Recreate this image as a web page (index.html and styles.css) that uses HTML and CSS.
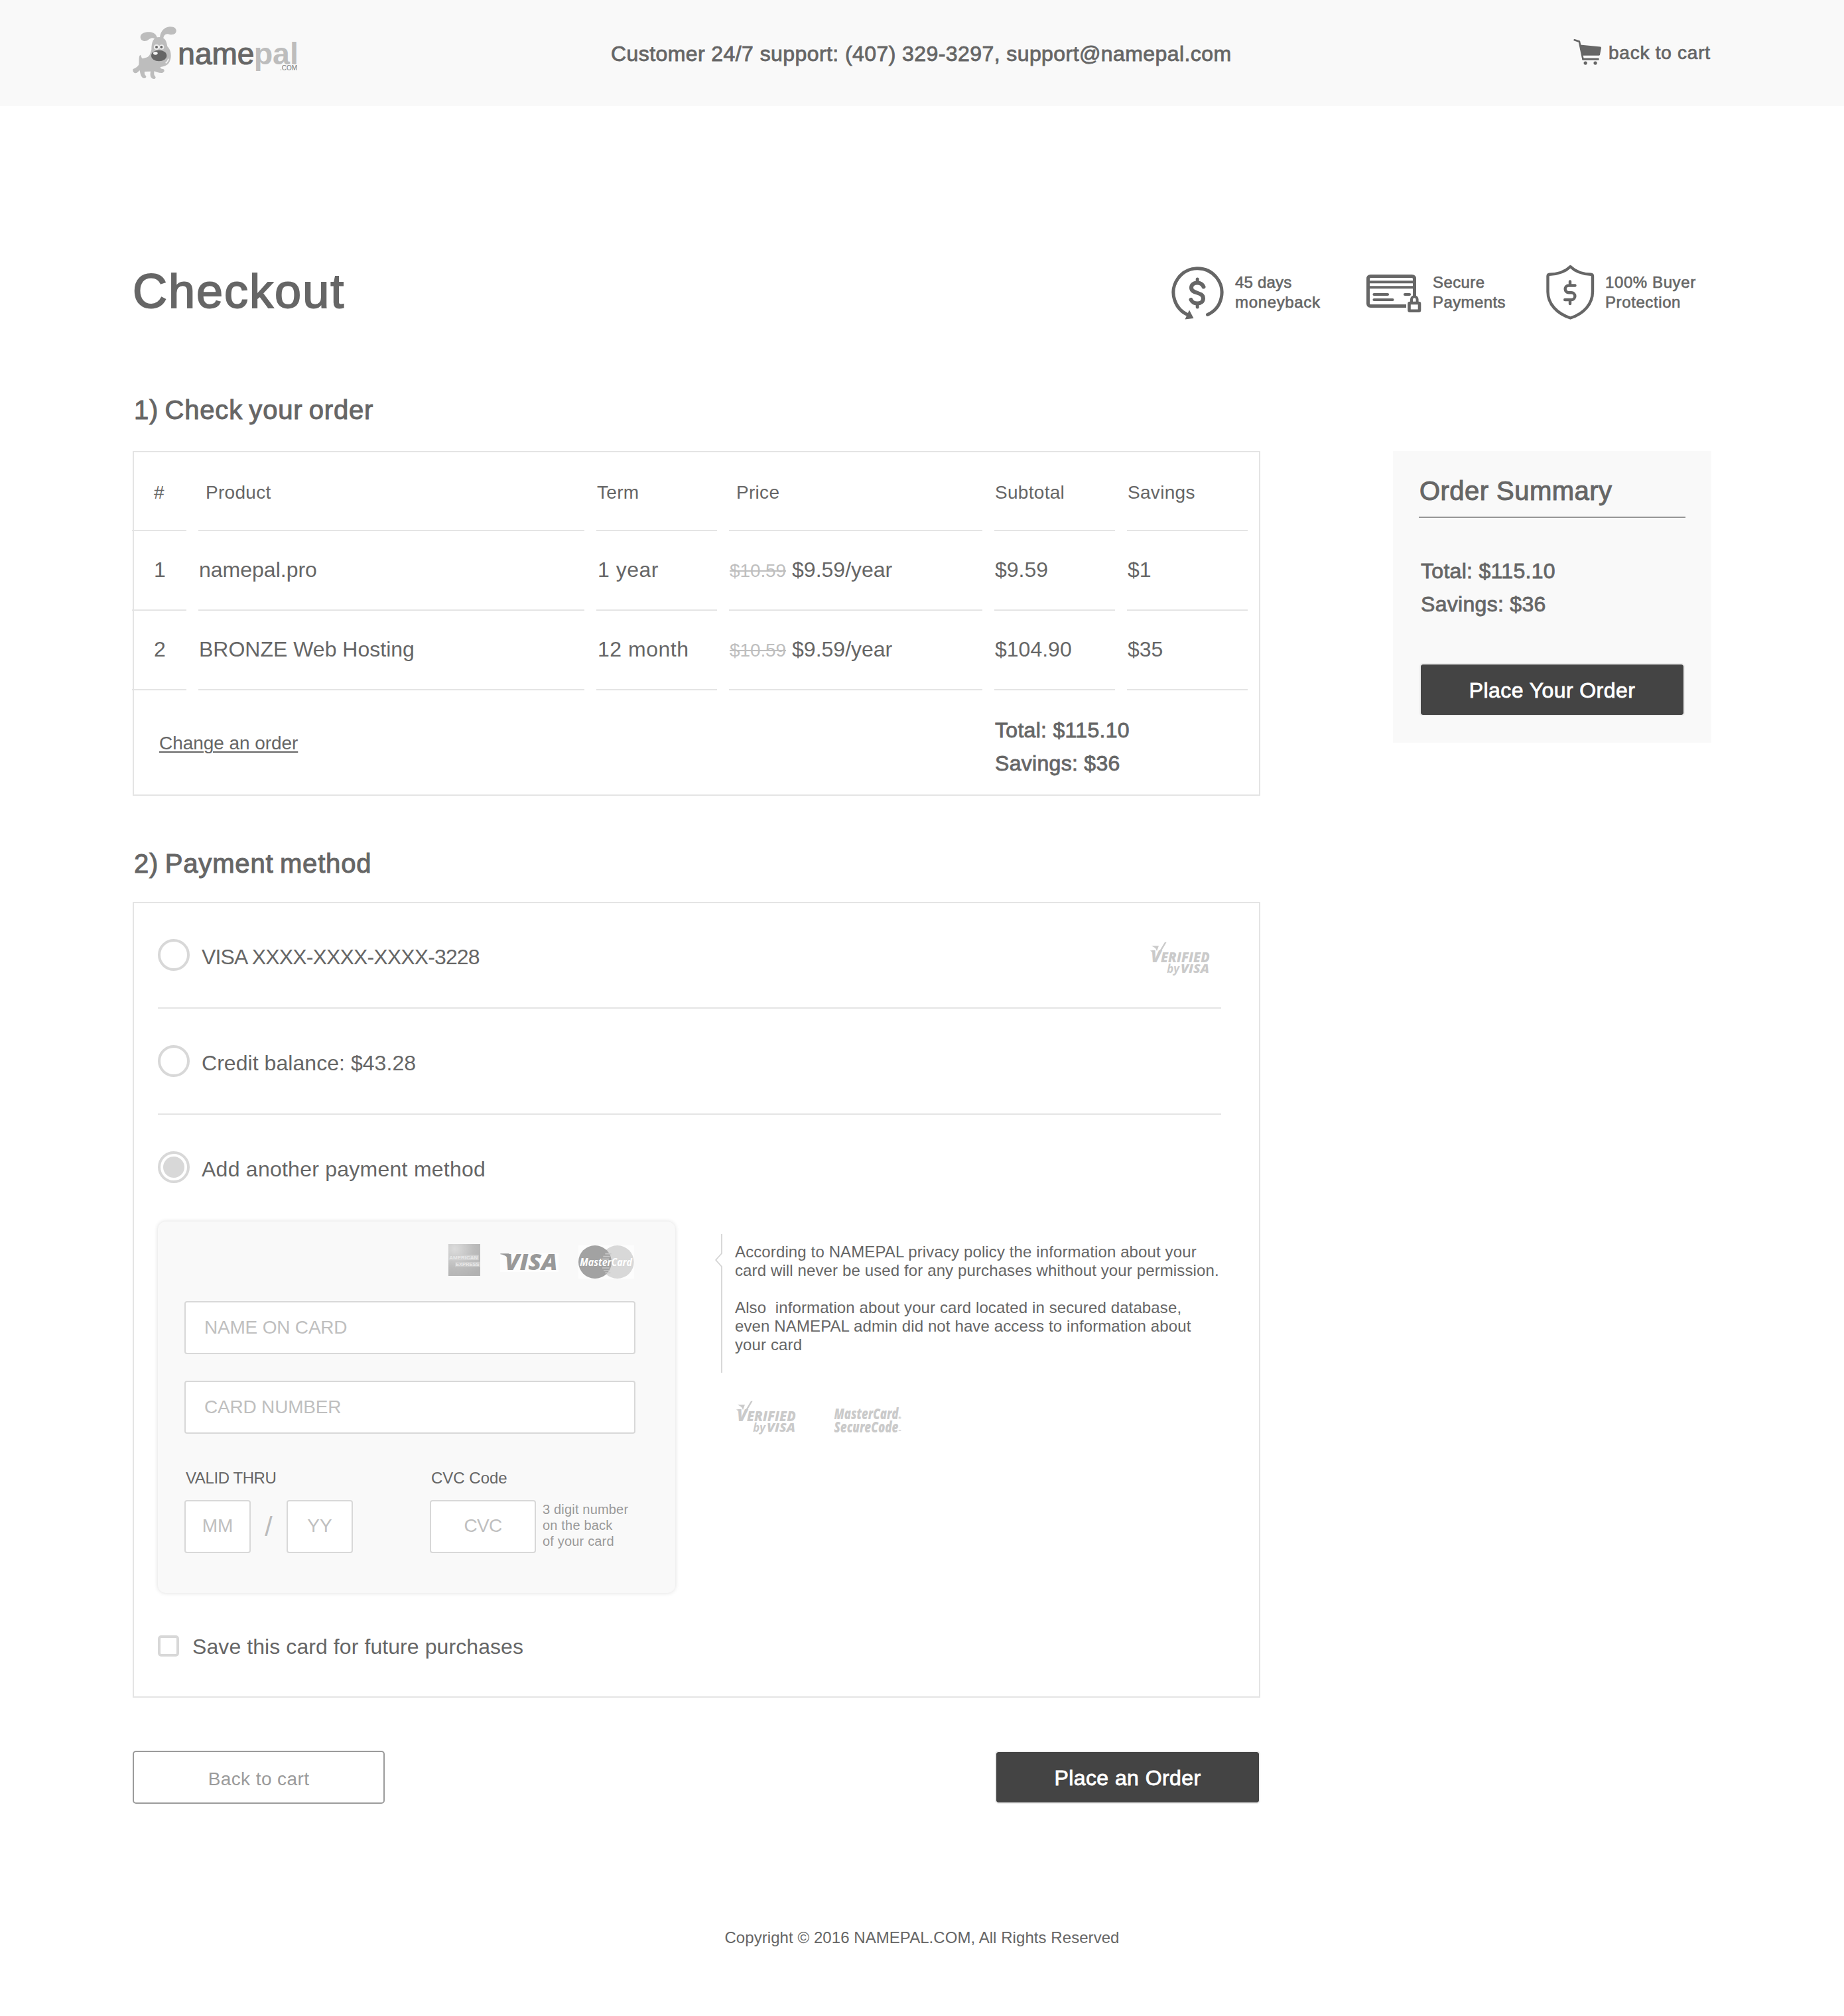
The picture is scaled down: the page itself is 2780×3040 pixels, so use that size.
FILE: index.html
```html
<!DOCTYPE html>
<html lang="en">
<head>
<meta charset="utf-8">
<title>Checkout – namepal.com</title>
<link rel="stylesheet" href="styles.css">
</head>
<body>
<svg width="0" height="0" class="defs">
  <symbol id="verified" viewBox="103 58 270 155" overflow="visible">
    <g fill="#cacaca" font-family="Open Sans, sans-serif" font-weight="800" font-style="italic">
      <path d="M109 77h33l-9 24c-2-8-5-13-11-17z"/>
      <path d="M169 60h8l-40 68-5-6z"/>
      <path d="M103 98h22v6h-16z"/>
      <text x="106" y="150" font-size="72" textLength="46" lengthAdjust="spacingAndGlyphs">V</text>
      <text x="151" y="150" font-size="62" textLength="221" lengthAdjust="spacingAndGlyphs">ERIFIED</text>
      <text x="179" y="199" font-size="52" font-weight="700" textLength="56" lengthAdjust="spacingAndGlyphs">by</text>
      <text x="241" y="199" font-size="52" textLength="129" lengthAdjust="spacingAndGlyphs">VISA</text>
    </g>
  </symbol>
</svg>

<header class="header">
  <div class="container header-inner">
    <svg class="logo" viewBox="60 60 750 240" width="250" height="80">
      <g fill="#bdbdbd">
        <path d="M166 122C152 106 142 112 130 121C116 131 95 125 95 107C96 91 116 84 136 85C158 86 168 98 172 114Z"/>
        <path d="M183 114C184 84 200 64 226 61C248 59 259 70 257 82C254 97 238 99 224 95C208 91 200 100 198 118Z"/>
        <path d="M145 165C145 130 153 108 180 108C206 108 213 124 217 150C232 164 236 188 231 208C225 230 212 240 186 243C184 248 186 251 198 252C207 256 204 270 190 270C176 270 168 266 158 262C156 272 156 280 162 286C168 294 158 300 148 295C138 288 139 275 141 263L114 264C113 272 114 279 119 282C125 289 118 296 108 293C97 288 94 272 92 258C86 262 82 270 74 271C64 271 58 259 62 252C72 248 82 244 88 232C90 214 86 198 94 188C100 192 98 200 104 205C118 202 132 200 138 186Z"/>
      </g>
      <path d="M209 226q10-6 13-20" fill="none" stroke="#f4f4f4" stroke-width="5"/>
      <ellipse cx="179" cy="192" rx="35" ry="25" fill="#666"/>
      <ellipse cx="163" cy="181" rx="10" ry="7" fill="#f4f4f4"/>
      <circle cx="168" cy="153" r="12" fill="#f0f0f0"/><circle cx="191" cy="153" r="11" fill="#f0f0f0"/>
      <circle cx="168" cy="153" r="6" fill="#666"/><circle cx="190" cy="153" r="6" fill="#666"/>
      <text x="265" y="232" font-size="139" fill="#666" stroke="#666" stroke-width="3.500" textLength="345" lengthAdjust="spacingAndGlyphs">name</text>
      <text x="608" y="232" font-size="139" font-weight="700" fill="#bdbdbd" textLength="202" lengthAdjust="spacingAndGlyphs">pal</text>
      <text x="726" y="259" font-size="30" fill="#777" textLength="78">.COM</text>
    </svg>
    <div class="support">Customer 24/7 support: (407) 329-3297, support@namepal.com</div>
    <a class="cart-link">
      <svg viewBox="95 52 130 122" width="43" height="41" fill="#666">
        <path d="M100 58L122 65L139 146" fill="none" stroke="#666" stroke-width="8" stroke-linecap="round" stroke-linejoin="round"/>
        <path d="M126 80L218 89Q222 90 222 94L216 125Q215 129 211 129H136Z"/>
        <path d="M135 141h74q3 0 3 3v3q0 3-3 3h-72z"/>
        <circle cx="150" cy="163" r="8"/><circle cx="195" cy="163" r="8"/>
      </svg>
      <span>back to cart</span>
    </a>
  </div>
</header>

<main class="container">
  <div class="title-row">
    <h1>Checkout</h1>
    <div class="badges">
      <div class="badge badge-money">
        <svg viewBox="1766 400 78 84" width="78" height="84" fill="none" stroke="#666" stroke-width="5" stroke-linecap="round">
          <path d="M1820.5 474.5A36.5 36.5 0 1 0 1793 475.5"/>
          <path d="M1793 467.5L1799.5 480L1786.5 481.5Z" fill="#666" stroke="none"/>
          <path d="M1814.5 432.5C1812.5 428 1809 426.5 1805 426.5C1799 426.5 1796 430 1796 434C1796 443.500 1814 439.500 1814 450C1814 454.500 1810.500 457.500 1805 457.500C1800.500 457.500 1797.500 456 1795.500 452" stroke-width="6"/>
          <path d="M1805.200 421v5M1805.200 458v5"/>
        </svg>
        <p>45 days<br><span>moneyback</span></p>
      </div>
      <div class="badge">
        <svg viewBox="2060 400 84 84" width="84" height="84" fill="none" stroke="#666" stroke-width="5">
          <path d="M2120 461.500H2066.500Q2062.500 461.500 2062.500 457.500V420.500Q2062.500 416.500 2066.500 416.500H2128.500Q2132.500 416.500 2132.500 420.500V446"/>
          <path d="M2063 425.200H2132M2063 433.200H2132" stroke-width="4"/>
          <path d="M2071.500 444H2092M2118 444H2125M2071.500 452H2099.500" stroke-width="4.200" stroke-linecap="round"/>
          <path d="M2128 456V451.500A4.300 4.300 0 0 1 2136.600 451.500V456" stroke-width="4"/>
          <rect x="2124.500" y="457" width="15.500" height="11.700" rx="1" stroke-width="4.600"/>
        </svg>
        <p>Secure<br>Payments</p>
      </div>
      <div class="badge badge-protect">
        <svg viewBox="2331 399 73 84" width="73" height="84" fill="none" stroke="#666" stroke-width="4.400" stroke-linejoin="round" stroke-linecap="round">
          <path d="M2367.500 402C2360 409.500 2350 413.300 2336 413.800Q2333.500 414 2333.500 416.500V440C2333.500 458 2347 473 2367.500 479.500C2388 473 2401 458 2401 440V416.500Q2401 414 2398.500 413.800C2385 413.300 2375 409.500 2367.500 402Z"/>
          <path d="M2374.500 430.500H2365A5.350 5.350 0 0 0 2365 441.200H2369A5.350 5.350 0 0 1 2369 452H2359.200M2367 424.500V430M2367 452.500V458"/>
        </svg>
        <p>100% Buyer<br>Protection</p>
      </div>
    </div>
  </div>

  <div class="columns">
    <div class="main-col">
      <h2>1) Check your order</h2>
      <section class="box order">
        <div class="row row-head">
          <div class="num">#</div><div class="indent">Product</div><div>Term</div><div class="indent">Price</div><div>Subtotal</div><div>Savings</div>
        </div>
        <div class="row">
          <div class="num">1</div><div>namepal.pro</div><div class="term">1 year</div><div class="price"><span><s>$10.59</s>$9.59/year</span></div><div>$9.59</div><div>$1</div>
        </div>
        <div class="row">
          <div class="num">2</div><div>BRONZE Web Hosting</div><div class="term">12 month</div><div class="price"><span><s>$10.59</s>$9.59/year</span></div><div>$104.90</div><div>$35</div>
        </div>
        <div class="order-foot">
          <a class="change">Change an order</a>
          <p class="totals">Total: $115.10<br>Savings: $36</p>
        </div>
      </section>

      <h2 class="h-pay">2) Payment method</h2>
      <section class="box payment">
        <div class="option option-first">
          <span class="radio"></span><span class="label visa-number">VISA XXXX-XXXX-XXXX-3228</span>
          <svg class="verified-right" width="90" height="51.700"><use href="#verified"/></svg>
        </div>
        <div class="option"><span class="radio"></span><span class="label">Credit balance: $43.28</span></div>
        <div class="option option-last"><span class="radio checked"></span><span class="label add-label">Add another payment method</span></div>

        <div class="new-card">
          <div class="card">
            <div class="brands">
              <svg viewBox="48 48 144 144" width="48" height="48">
                <defs><radialGradient id="amex" cx=".2" cy=".15" r="1"><stop offset="0" stop-color="#dcdcdc"/><stop offset=".6" stop-color="#bcbcbc"/><stop offset="1" stop-color="#b2b2b2"/></radialGradient></defs>
                <rect x="48" y="48" width="144" height="144" fill="url(#amex)"/>
                <rect x="49" y="97" width="136" height="24" fill="#cfcfcf"/>
                <rect x="78" y="128" width="113" height="23" fill="#cacaca"/>
                <g font-size="21" font-weight="700" fill="#e8e8e8">
                  <text x="52" y="117" textLength="129" lengthAdjust="spacingAndGlyphs">AMERICAN</text>
                  <text x="81" y="147" textLength="107" lengthAdjust="spacingAndGlyphs">EXPRESS</text>
                </g>
              </svg>
              <svg class="visa" viewBox="282 90 264 84" width="88" height="28">
                <rect x="282" y="90" width="264" height="84" fill="#fdfdfd"/>
                <path d="M283 91h40l-8 18c-8-8-18-13-32-15z" fill="#999"/>
                <text x="303" y="164" font-family="Open Sans, sans-serif" font-size="101" font-weight="800" font-style="italic" fill="#999" textLength="239" lengthAdjust="spacingAndGlyphs">VISA</text>
              </svg>
              <svg class="mastercard" viewBox="636 54 252 150" width="84" height="50">
                <rect x="636" y="54" width="252" height="150" fill="#fdfdfd"/>
                <circle cx="812" cy="129" r="75" fill="#d8d8d8"/>
                <circle cx="711" cy="129" r="75" fill="#a2a2a2"/>
                <path d="M757 92h28M748 104h30M744 116h30M744 156h32M750 168h28M757 178h24" stroke="#c8c8c8" stroke-width="5"/>
                <text x="643" y="148" font-family="Open Sans, sans-serif" font-size="49" font-weight="700" font-style="italic" fill="#fff" textLength="236" lengthAdjust="spacingAndGlyphs">MasterCard</text>
              </svg>
            </div>
            <div class="field wide">NAME ON CARD</div>
            <div class="field wide">CARD NUMBER</div>
            <div class="small-fields">
              <div class="group">
                <div class="field-label valid">VALID THRU</div>
                <div class="line"><div class="field short">MM</div><span class="slash">/</span><div class="field short">YY</div></div>
              </div>
              <div class="group">
                <div class="field-label">CVC Code</div>
                <div class="line"><div class="field cvc">CVC</div><p class="hint">3 digit number<br>on the back<br>of your card</p></div>
              </div>
            </div>
          </div>
          <aside class="policy">
            <div class="policy-text">
              <svg viewBox="0 0 12 209" width="12" height="209" fill="none" stroke="#d4d4d4" stroke-width="1.800"><path d="M10 0V29L1.200 39L10 49V209"/></svg>
              <p>According to NAMEPAL privacy policy the information about your<br>card will never be used for any purchases whithout your permission.<br><br>Also&nbsp; information about your card located in secured database,<br>even NAMEPAL admin did not have access to information about<br>your card</p>
            </div>
            <div class="secure-logos">
              <svg width="90" height="51.700"><use href="#verified"/></svg>
              <svg viewBox="1257 2122 104 42" width="104" height="42" fill="#cacaca" font-family="Open Sans, sans-serif" font-weight="800" font-style="italic">
                <text x="1257.500" y="2140" font-size="22" textLength="97" lengthAdjust="spacingAndGlyphs">MasterCard</text>
                <text x="1257.500" y="2160" font-size="22" textLength="97" lengthAdjust="spacingAndGlyphs">SecureCode</text>
                <text x="1354.500" y="2140" font-size="5" font-style="normal">®</text>
                <text x="1354.500" y="2160" font-size="5" font-style="normal">™</text>
              </svg>
            </div>
          </aside>
        </div>

        <div class="save"><span class="checkbox"></span><span class="save-label">Save this card for future purchases</span></div>
      </section>

      <div class="actions">
        <a class="btn-outline">Back to cart</a>
        <a class="btn">Place an Order</a>
      </div>
    </div>

    <aside class="summary">
      <h3>Order Summary</h3>
      <p>Total: $115.10<br>Savings: $36</p>
      <a class="btn">Place Your Order</a>
    </aside>
  </div>
</main>

<footer class="footer">Copyright © 2016 NAMEPAL.COM, All Rights Reserved</footer>
</body>
</html>
```
FILE: styles.css
```css
* { box-sizing: border-box; }
body {
  margin: 0;
  background: #fff;
  color: #666;
  font-family: "Liberation Sans", Arial, sans-serif;
  font-size: 32px;
}
h1, h2, h3, p { margin: 0; font-weight: 400; }
svg { display: block; flex: none; overflow: visible; }
.defs { position: absolute; }
.container { width: 2380px; margin: 0 auto; }

/* medium weight */
h1, h2, h3, .support, .cart-link span, .badge p, .totals, .summary p, .btn { -webkit-text-stroke: .026em; }

.header { height: 160px; background: #f9f9f9; }
.header-inner { display: flex; height: 160px; align-items: center; }
.support { letter-spacing: .42px; padding-top: 2px; margin-left: 471px; white-space: nowrap; }
.cart-link { display: flex; align-items: center; font-size: 28px; letter-spacing: .75px; width: 208px; gap: 10px; margin-left: auto; white-space: nowrap; }
.cart-link svg { margin-top: -4px; }

.title-row { display: flex; justify-content: space-between; height: 80px; margin-top: 240px; }
h1 { font-size: 72px; line-height: 78px; letter-spacing: 2px; }
.badges { display: grid; grid-template-columns: 294px 271px 249px; }
.badge { display: flex; gap: 16px; font-size: 24px; line-height: 30px; letter-spacing: .4px; }
.badge p { padding-top: 11px; white-space: nowrap; }
.badge-money { letter-spacing: .2px; gap: 18px; }
.badge-money span { letter-spacing: .65px; }
.badge-protect { letter-spacing: .6px; }
.badge-protect svg { margin-top: -1px; }

.columns { display: flex; justify-content: space-between; align-items: flex-start; margin-top: 114px; }
.main-col { width: 1700px; }
h2 { font-size: 40px; line-height: 48px; letter-spacing: .8px; word-spacing: -2.500px; padding-left: 2px; margin-bottom: 38px; }
.h-pay { margin: 78px 0 34px; letter-spacing: .84px; }
.box { border: 2px solid #e4e4e4; }

.order { height: 520px; }
.row { display: grid; grid-template-columns: 82px 582px 182px 382px 182px 182px; gap: 18px; height: 120px; margin-left: -3px; }
.row > div { display: flex; align-items: center; border-bottom: 2px solid #e4e4e4; padding: 0 0 2px 1px; white-space: nowrap; }
.row > .num { padding-left: 33px; }
.row-head { height: 119px; font-size: 28px; letter-spacing: .3px; }
.row-head > div { padding: 4px 0 0 1px; }
.row > .indent { padding-left: 11px; }
.row > .term { letter-spacing: .5px; padding-left: 2px; }
.price s { font-size: 28px; color: #bfbfbf; margin-right: 9px; letter-spacing: -.1px; }
.order-foot { display: flex; justify-content: space-between; padding: 35px 188px 0 38px; }
.change { font-size: 28px; line-height: 40px; margin-top: 25px; letter-spacing: -.06px; text-decoration: underline; text-decoration-thickness: 2px; text-underline-offset: 3px; }
.totals { line-height: 50px; width: 210px; letter-spacing: .3px; white-space: nowrap; }

.payment { height: 1200px; padding-left: 36px; }
.option { display: flex; align-items: center; width: 1603px; height: 160px; border-bottom: 2px solid #e4e4e4; }
.option-first { height: 159px; padding-bottom: 1px; }
.option-last { height: 158px; border: 0; margin-bottom: 3px; }
.radio { width: 48px; height: 48px; border: 4px solid #d8d8d8; border-radius: 50%; margin-right: 18px; }
.checked { background: #d8d8d8 content-box; padding: 4px; }
.label { padding-top: 7px; letter-spacing: .05px; }
.visa-number { letter-spacing: -.86px; }
.add-label { letter-spacing: .25px; }
.verified-right { margin: 11px 17px 0 auto; }

.new-card { display: flex; align-items: flex-start; }
.card { width: 780px; height: 560px; padding: 34px 60px 0 40px; border-radius: 12px; background: #f9f9f9; box-shadow: 0 0 6px rgba(0, 0, 0, .14); }
.brands { display: flex; justify-content: flex-end; height: 52px; margin-bottom: 34px; padding-right: 2px; }
.visa { margin: 14px 30px 0; }
.mastercard { margin-top: 2px; }
.field { height: 80px; border: 2px solid #d8d8d8; border-radius: 4px; background: #fff; color: #bfbfbf; font-size: 28px; line-height: 75px; text-align: center; }
.wide { width: 680px; margin-bottom: 40px; padding-left: 28px; text-align: left; letter-spacing: -.2px; }
.small-fields { display: flex; gap: 116px; margin-top: 52px; }
.field-label { font-size: 24px; line-height: 30px; margin-bottom: 18px; padding-left: 2px; }
.valid { letter-spacing: -.4px; }
.line { display: flex; align-items: center; }
.short { width: 100px; line-height: 73px; }
.cvc { width: 160px; line-height: 73px; letter-spacing: -.7px; }
.slash { width: 54px; text-align: center; font-size: 41px; color: #bbb; }
.hint { font-size: 20px; line-height: 24px; letter-spacing: .18px; color: #999; padding: 0 0 4px 10px; white-space: nowrap; }

.policy { padding: 19px 0 0 60px; }
.policy-text { display: flex; font-size: 24px; line-height: 28px; letter-spacing: .12px; white-space: nowrap; }
.policy-text p { padding: 13px 0 0 18px; }
.secure-logos { display: flex; gap: 57px; margin: 42px 0 0 32px; }
.secure-logos svg + svg { margin-top: 10px; }

.save { display: flex; align-items: center; height: 32px; margin-top: 64px; letter-spacing: .08px; }
.save-label { padding-top: 2px; }
.checkbox { width: 32px; height: 32px; border: 4px solid #d8d8d8; border-radius: 5px; margin-right: 20px; }

.actions { display: flex; justify-content: space-between; margin-top: 80px; }
.btn, .btn-outline { display: block; height: 80px; border: 2px solid #eee; border-radius: 5px; text-align: center; }
.btn { width: 400px; background: #444; background-clip: padding-box; color: #fff; line-height: 78px; letter-spacing: .42px; }
.btn-outline { width: 380px; border-color: #9b9b9b; color: #9b9b9b; font-size: 28px; line-height: 81px; letter-spacing: .4px; }

.summary { width: 480px; height: 440px; margin-top: 86px; padding: 36px 39px; background: #f9f9f9; }
.summary h3 { font-size: 40px; line-height: 48px; letter-spacing: .46px; padding: 0 0 15px 1px; border-bottom: 2px solid #969696; }
.summary p { line-height: 50px; letter-spacing: .3px; padding: 55px 0 0 3px; }
.summary .btn { margin: 64px 0 0 1px; }

.footer { margin-top: 187px; text-align: center; font-size: 24px; line-height: 30px; letter-spacing: .06px; }
```
